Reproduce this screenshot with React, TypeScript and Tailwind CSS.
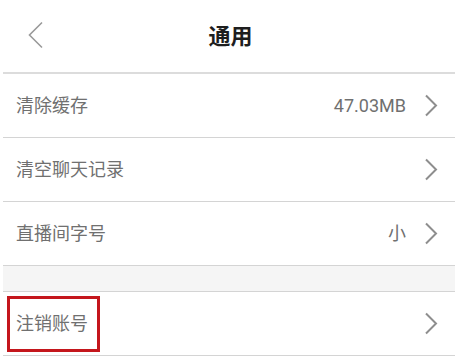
import React from "react";

const ROWS = [
  { label: "清除缓存", value: "47.03MB" },
  { label: "清空聊天记录", value: "" },
  { label: "直播间字号", value: "小" },
];

function Chevron() {
  return (
    <svg width="14" height="23" viewBox="0 0 14 23" fill="none" className="shrink-0">
      <path d="M2 1.5 L12 11.5 L2 21.5" stroke="#8e8e8e" strokeWidth="2" />
    </svg>
  );
}

function Row({
  label,
  value,
  boxed,
}: {
  label: string;
  value?: string;
  boxed?: boolean;
}) {
  return (
    <div className="ml-[3px] flex h-[64px] items-center border-b border-[#d4d4d4] pr-[17px]">
      {boxed ? (
        <div className="ml-[4px] flex h-[56px] w-[93px] items-center border-[3px] border-[#c4161c] pl-[6px]">
          <span className="text-[18px] text-[#707070]">{label}</span>
        </div>
      ) : (
        <span className="ml-[13px] text-[18px] text-[#707070]">{label}</span>
      )}
      <div className="ml-auto flex items-center gap-[18px]">
        {value ? <span className="text-[18px] text-[#707070]">{value}</span> : null}
        <Chevron />
      </div>
    </div>
  );
}

export default function App() {
  return (
    <div
      className="h-[358px] w-[455px] overflow-hidden bg-white"
      style={{ fontFamily: 'Roboto, "Noto Sans CJK SC", sans-serif' }}
    >
      <div className="relative ml-[3px] flex h-[74px] items-center justify-center border-b-2 border-[#dcdcdc]">
        <svg
          width="17"
          height="28"
          viewBox="0 0 17 28"
          fill="none"
          className="absolute left-[24px] top-[21px]"
        >
          <path d="M15 1.5 L2.5 14 L15 26.5" stroke="#9a9a9a" strokeWidth="1.6" />
        </svg>
        <span className="ml-[3px] text-[22px] font-bold text-[#1e1e1e]">通用</span>
      </div>
      {ROWS.map((r) => (
        <Row key={r.label} label={r.label} value={r.value} />
      ))}
      <div className="ml-[3px] h-[26px] border-b border-[#d4d4d4] bg-[#f5f5f5]" />
      <Row label="注销账号" boxed />
    </div>
  );
}
